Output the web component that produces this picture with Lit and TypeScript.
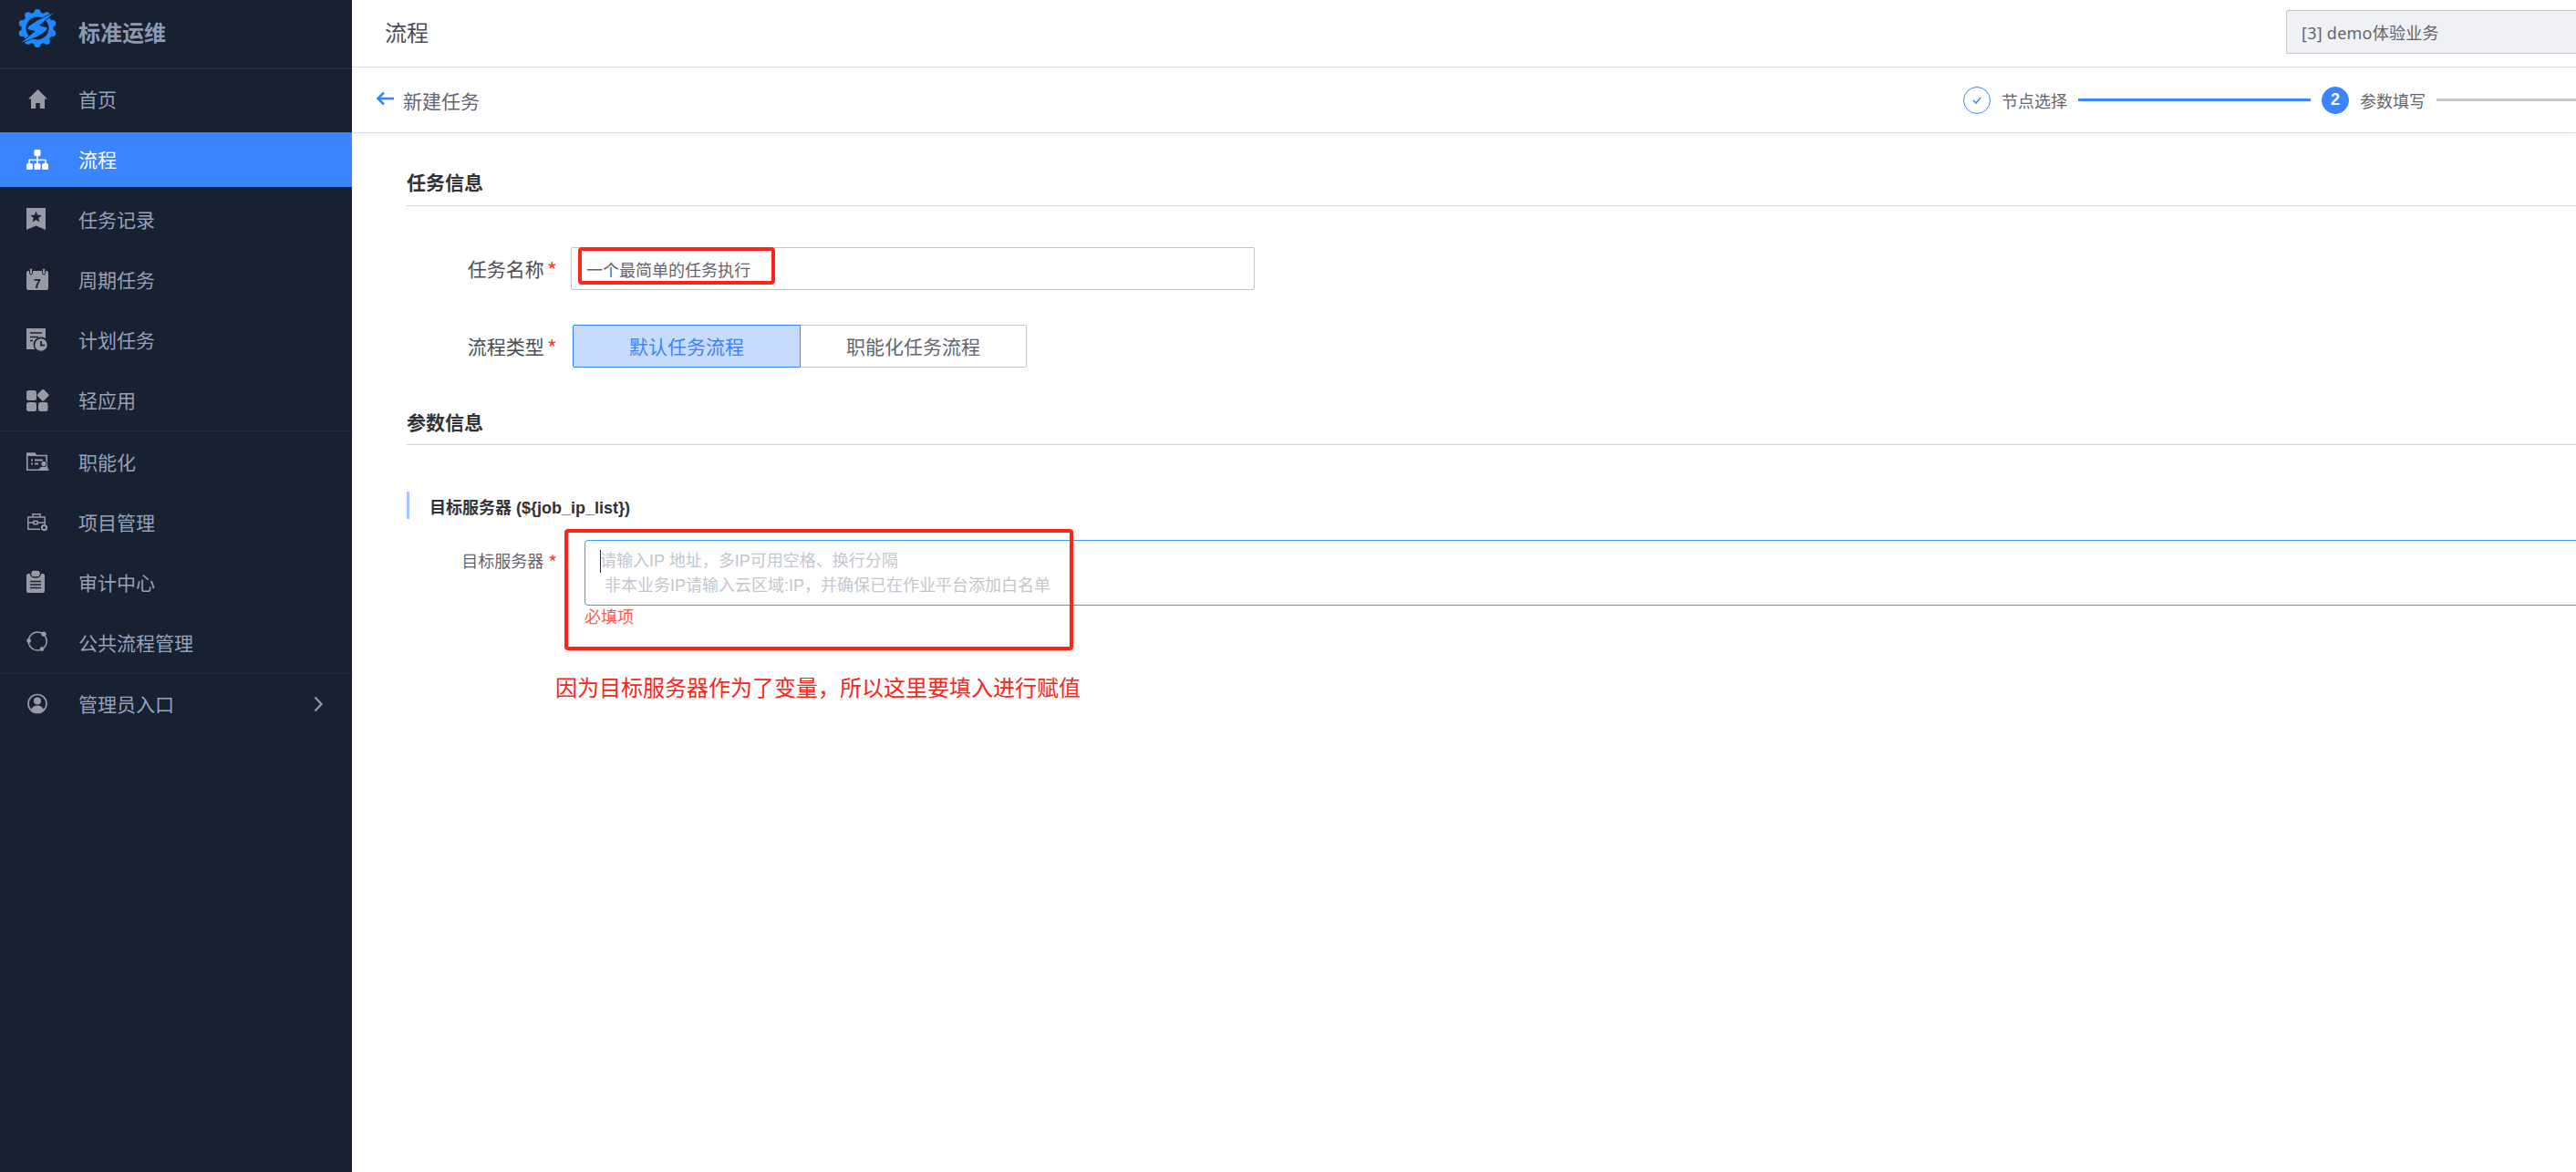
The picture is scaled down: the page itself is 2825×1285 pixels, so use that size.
import { LitElement, html, css, svg } from "lit";
import { customElement } from "lit/decorators.js";

const BG = "#182132";

const gearBumps = Array.from({ length: 10 }, (_, i) => {
  const a = (i / 10) * Math.PI * 2 - Math.PI / 2;
  return svg`<circle cx=${21 + 17.5 * Math.cos(a)} cy=${21 + 17.5 * Math.sin(a)} r="3.6" fill="#1e88ff"></circle>`;
});

const icons: Record<string, unknown> = {
  home: svg`<path d="M13.5 2 24 12.5h-3V23h-5.2v-6h-4.6v6H6V12.5H3z" fill="currentColor"/>`,
  org: svg`<g fill="currentColor"><rect x="9.5" y="2" width="7" height="7" rx="1.5"/><rect x="12.2" y="8" width="1.6" height="9"/><rect x="4" y="12.6" width="18" height="1.6"/><rect x="3.2" y="13" width="1.6" height="5"/><rect x="21.2" y="13" width="1.6" height="5"/><rect x="1" y="17" width="7" height="7" rx="1.5"/><rect x="9.5" y="17" width="7" height="7" rx="1.5"/><rect x="18" y="17" width="7" height="7" rx="1.5"/></g>`,
  mark: svg`<path d="M1 0h21v24l-10.5-4.5L1 24z" fill="currentColor"/><polygon points="11.5,3.5 13.2,7.8 17.8,8 14.2,11 15.5,15.5 11.5,13 7.5,15.5 8.8,11 5.2,8 9.8,7.8" fill="${BG}"/>`,
  cal: svg`<rect x="1" y="3" width="24" height="21" rx="2" fill="currentColor"/><rect x="4.5" y="0" width="3" height="7" rx="1.5" fill="currentColor" stroke="${BG}"/><rect x="18.5" y="0" width="3" height="7" rx="1.5" fill="currentColor" stroke="${BG}"/><text x="13" y="21.5" text-anchor="middle" font-family="Liberation Sans" font-weight="700" font-size="14" fill="${BG}">7</text>`,
  plan: svg`<rect x="1" y="0" width="21" height="23" fill="currentColor"/><path d="M5 5h13M5 9.5h9M5 13.5h3" stroke="${BG}" stroke-width="1.6"/><circle cx="17" cy="18" r="7.6" fill="currentColor" stroke="${BG}" stroke-width="1.6"/><path d="M17 14v4.6h4" fill="none" stroke="${BG}" stroke-width="1.8"/>`,
  apps: svg`<g fill="currentColor"><rect x="1" y="2" width="11" height="11" rx="2.5"/><rect x="1" y="15" width="11" height="10" rx="2.5"/><rect x="14" y="15" width="10.5" height="10" rx="2.5"/><rect x="14.2" y="2.2" width="10" height="10" rx="1.5" transform="rotate(45 19.2 7.2)"/></g>`,
  folder: svg`<path d="M1.8 3h8l2 2.5h11.4v15.7H1.8z" fill="none" stroke="currentColor" stroke-width="1.6"/><path d="M2 3h8l2 3H2z" fill="currentColor"/><path d="M6 10.5h2M10 10.5h9M6 14.5h2M10 14.5h4" stroke="currentColor" stroke-width="1.8"/><circle cx="20" cy="14.5" r="3.2" fill="currentColor" stroke="${BG}"/><path d="M14.5 22q0-4.2 5.5-4.2t5.5 4.2z" fill="currentColor"/>`,
  case: svg`<g fill="none" stroke="currentColor" stroke-width="1.5"><path d="M16 20.2H2.8V7h18.4v8"/><path d="M8 7V3.8h8V7"/><path d="M3 13h6M13 13h8"/><rect x="9" y="11.3" width="4" height="3.4"/></g><circle cx="20.5" cy="18.5" r="2.6" fill="none" stroke="currentColor" stroke-width="2"/>`,
  clip: svg`<rect x="1" y="3" width="20" height="21" rx="2" fill="currentColor"/><rect x="5.5" y="-1" width="11" height="8" rx="4" fill="currentColor" stroke="${BG}" stroke-width="1.4"/><path d="M5 11.5h12M5 15h12M5 18.5h12" stroke="${BG}" stroke-width="1.5"/>`,
  cycle: svg`<circle cx="13.2" cy="11" r="10" fill="none" stroke="currentColor" stroke-width="1.5"/><g fill="currentColor"><circle cx="20" cy="3.2" r="2.6"/><circle cx="3.6" cy="10.5" r="2.4"/><circle cx="18" cy="19.6" r="2.4"/></g>`,
  user: svg`<circle cx="13" cy="12.5" r="10" fill="none" stroke="currentColor" stroke-width="1.7"/><circle cx="13" cy="9.5" r="4" fill="currentColor"/><path d="M6 19.2q1.8-4.7 7-4.7t7 4.7q-3 3-7 3t-7-3z" fill="currentColor"/>`,
};

interface Item { label: string; icon: string; active?: boolean; arrow?: boolean }
const groups: Item[][] = [
  [
    { label: "首页", icon: "home" },
    { label: "流程", icon: "org", active: true },
    { label: "任务记录", icon: "mark" },
    { label: "周期任务", icon: "cal" },
    { label: "计划任务", icon: "plan" },
    { label: "轻应用", icon: "apps" },
  ],
  [
    { label: "职能化", icon: "folder" },
    { label: "项目管理", icon: "case" },
    { label: "审计中心", icon: "clip" },
    { label: "公共流程管理", icon: "cycle" },
  ],
  [{ label: "管理员入口", icon: "user", arrow: true }],
];

@customElement("app-root")
export class AppRoot extends LitElement {
  static styles = css`
    :host {
      display: block;
      font-family: "Liberation Sans", "Noto Sans CJK SC", sans-serif;
      color: #63656e;
    }
    * { box-sizing: border-box; }
    .app {
      display: grid;
      grid-template-columns: 386px 1fr;
      height: 1285px;
      overflow: hidden;
      background: #fff;
    }
    .side { background: #182132; color: #96a2b9; }
    .brand {
      height: 76px;
      border-bottom: 2px solid #242d3e;
      display: flex;
      align-items: center;
      padding: 0 0 12px 20px;
    }
    .brand svg { display: block; overflow: visible; }
    .brand span { margin: 6px 0 0 24px; font-size: 24px; font-weight: 700; color: #8d99ae; }
    .group { display: flex; flex-direction: column; border-bottom: 1px solid #242d3e; }
    .group.second { padding-top: 1px; }
    .group.last { border-bottom: 0; }
    .item {
      display: flex;
      align-items: center;
      height: 60px;
      margin: 3px 0;
      padding: 0 32px 0 28px;
      font-size: 21px;
      color: #96a2b9;
    }
    .item .ico { width: 26px; height: 26px; color: #979ba5; overflow: visible; flex: none; }
    .item .lbl { margin: -2px 0 0 32px; }
    .item .chev { margin-left: auto; }
    .item.active { background: #3a84ff; color: #fff; }
    .item.active .ico { color: #fff; }

    .main { min-width: 0; overflow: hidden; display: flex; flex-direction: column; }
    .top {
      height: 74px;
      flex: none;
      border-bottom: 1px solid #dcdee5;
      display: flex;
      align-items: center;
      justify-content: space-between;
      padding-left: 36px;
      font-size: 24px;
      color: #4b4d55;
    }
    .top > span { margin-top: -5px; }
    .biz {
      width: 322px;
      margin: -3px -4px 0 0;
      height: 48px;
      background: #f0f1f5;
      border: 1px solid #c4c6cc;
      border-radius: 2px;
      display: flex;
      align-items: center;
      padding-left: 16px;
      font-family: "Noto Sans", "Noto Sans CJK SC", sans-serif;
      font-size: 18px;
      letter-spacing: 0.25px;
      color: #63656e;
    }
    .sub {
      height: 72px;
      flex: none;
      border-bottom: 1px solid #dcdee5;
      box-shadow: 0 3px 8px rgba(220, 222, 229, 0.35);
      display: flex;
      align-items: center;
      padding-left: 26px;
      font-size: 21px;
      color: #63656e;
    }
    .back { display: block; margin: -4px 10px 0 0; }
    .steps {
      margin-left: auto;
      width: 672px;
      display: flex;
      align-items: center;
      gap: 12px;
      font-size: 18px;
    }
    .dot {
      width: 30px;
      height: 30px;
      border-radius: 50%;
      border: 1px solid #3a84ff;
      display: flex;
      align-items: center;
      justify-content: center;
      flex: none;
    }
    .dot.on { background: #3a84ff; color: #fff; font-weight: 700; font-size: 18px; }
    .line { height: 3px; background: #3a84ff; width: 255px; flex: none; }
    .line.rest { background: #c4c6cc; flex: 1; width: auto; }

    .content { padding-left: 60px; flex: 1; }
    .sec {
      height: 41px;
      line-height: 32px;
      margin-top: 39px;
      border-bottom: 1px solid #d4d5dc;
      font-size: 21px;
      font-weight: 700;
      color: #313238;
    }
    .sec.two { margin-top: 45px; height: 40px; }
    .row { display: flex; position: relative; }
    .row.name { margin-top: 45px; height: 47px; align-items: center; }
    .row.type { margin-top: 38px; height: 47px; align-items: center; }
    .lab {
      width: 165px;
      padding-bottom: 2px;
      text-align: right;
      font-size: 21px;
      color: #4b4d55;
      flex: none;
    }
    .star {
      color: #ff3b30;
      margin-left: 3px;
      font-family: "Noto Sans CJK SC", sans-serif;
      font-size: 24px;
      line-height: 0;
      vertical-align: -3px;
    }
    .input {
      margin-left: 15px;
      width: 750px;
      height: 47px;
      border: 1px solid #c4c6cc;
      border-radius: 2px;
      display: flex;
      align-items: center;
      padding-left: 16px;
      font-size: 18px;
      color: #63656e;
      position: relative;
    }
    .mark {
      position: absolute;
      border: 4px solid #ff2318;
      border-radius: 4px;
      pointer-events: none;
    }
    .mark.a { left: 7px; top: -1px; width: 216px; height: 41px; }
    .mark.b { left: 173px; top: -12px; width: 558px; height: 133px; }
    .seg { display: flex; margin-left: 17px; font-size: 21px; }
    .seg div {
      height: 47px;
      padding-bottom: 2px;
      display: flex;
      align-items: center;
      justify-content: center;
      border: 1px solid #c4c6cc;
    }
    .seg .on {
      width: 250px;
      background: #c7dbff;
      border-color: #3a84ff;
      color: #3a84ff;
      border-radius: 2px 0 0 2px;
    }
    .seg .off { width: 248px; border-left: 0; border-radius: 0 2px 2px 0; }
    .var {
      margin-top: 51px;
      height: 30px;
      line-height: 36px;
      border-left: 3px solid #a3c5fd;
      padding-left: 22px;
      font-size: 18px;
      font-weight: 700;
      color: #313238;
    }
    .row.ip { margin-top: 23px; }
    .lab.small { font-size: 18px; line-height: 27px; padding: 11px 0 0; color: #63656e; }
    .lab.small .star { margin-left: 5px; font-size: 21px; }
    .field { margin: 0 -10px 0 30px; flex: 1; }
    .area {
      height: 72px;
      border: 1px solid #3a9cff;
      border-radius: 4px;
      padding: 9px 0 0 16px;
      font-size: 18px;
      line-height: 27px;
      color: #c4c6cc;
      white-space: pre;
      position: relative;
    }
    .caret {
      position: absolute;
      left: 16px;
      top: 10px;
      width: 1px;
      height: 25px;
      background: #313238;
    }
    .err { font-size: 18px; line-height: 27px; color: #ff5656; }
    .note {
      margin: 46px 0 0 163px;
      font-size: 24px;
      line-height: 36px;
      color: #ff2318;
    }
  `;

  private renderItem(it: Item) {
    return html`<div class="item ${it.active ? "active" : ""}">
      <svg class="ico" viewBox="0 0 26 26">${icons[it.icon]}</svg>
      <span class="lbl">${it.label}</span>
      ${it.arrow
        ? html`<svg class="chev" width="10" height="18" viewBox="0 0 10 18"><path d="M1.5 1.5 8.5 9l-7 7.5" fill="none" stroke="#979ba5" stroke-width="2.2"/></svg>`
        : ""}
    </div>`;
  }

  render() {
    return html`<div class="app">
      <aside class="side">
        <div class="brand">
          <svg width="42" height="42" viewBox="0 0 42 42">
            ${gearBumps}
            <circle cx="21" cy="21" r="17.5" fill="#1e88ff"></circle>
            <circle cx="21" cy="21" r="12.5" fill="${BG}"></circle>
            <polygon points="39,4 21,12.5 12,18.5 10,22 19,24 3,37 22,29.5 30,24 32,20.5 23,18" fill="#1e88ff" stroke="${BG}" stroke-width="1.4" paint-order="stroke"></polygon>
          </svg>
          <span>标准运维</span>
        </div>
        <div class="group">${groups[0].map((i) => this.renderItem(i))}</div>
        <div class="group second">${groups[1].map((i) => this.renderItem(i))}</div>
        <div class="group last">${groups[2].map((i) => this.renderItem(i))}</div>
      </aside>
      <main class="main">
        <div class="top">
          <span>流程</span>
          <div class="biz">[3] demo体验业务</div>
        </div>
        <div class="sub">
          <svg class="back" width="20" height="16" viewBox="0 0 20 16"><path d="M9 1.5 2.5 8 9 14.5M3 8h17" fill="none" stroke="#3a84ff" stroke-width="2.6"/></svg>
          <span>新建任务</span>
          <div class="steps">
            <div class="dot"><svg width="10" height="8" viewBox="0 0 10 8"><path d="M1 4l3 3 5-6" fill="none" stroke="#3a84ff" stroke-width="1.5"/></svg></div>
            <span>节点选择</span>
            <div class="line"></div>
            <div class="dot on">2</div>
            <span>参数填写</span>
            <div class="line rest"></div>
          </div>
        </div>
        <div class="content">
          <div class="sec">任务信息</div>
          <div class="row name">
            <div class="lab">任务名称<span class="star">*</span></div>
            <div class="input">一个最简单的任务执行<div class="mark a"></div></div>
          </div>
          <div class="row type">
            <div class="lab">流程类型<span class="star">*</span></div>
            <div class="seg"><div class="on">默认任务流程</div><div class="off">职能化任务流程</div></div>
          </div>
          <div class="sec two">参数信息</div>
          <div class="var">目标服务器 (\${job_ip_list})</div>
          <div class="row ip">
            <div class="lab small">目标服务器<span class="star">*</span></div>
            <div class="field">
              <div class="area"><div class="caret"></div>请输入IP 地址，多IP可用空格、换行分隔
 非本业务IP请输入云区域:IP，并确保已在作业平台添加白名单</div>
              <div class="err">必填项</div>
            </div>
            <div class="mark b"></div>
          </div>
          <div class="note">因为目标服务器作为了变量，所以这里要填入进行赋值</div>
        </div>
      </main>
    </div>`;
  }
}
